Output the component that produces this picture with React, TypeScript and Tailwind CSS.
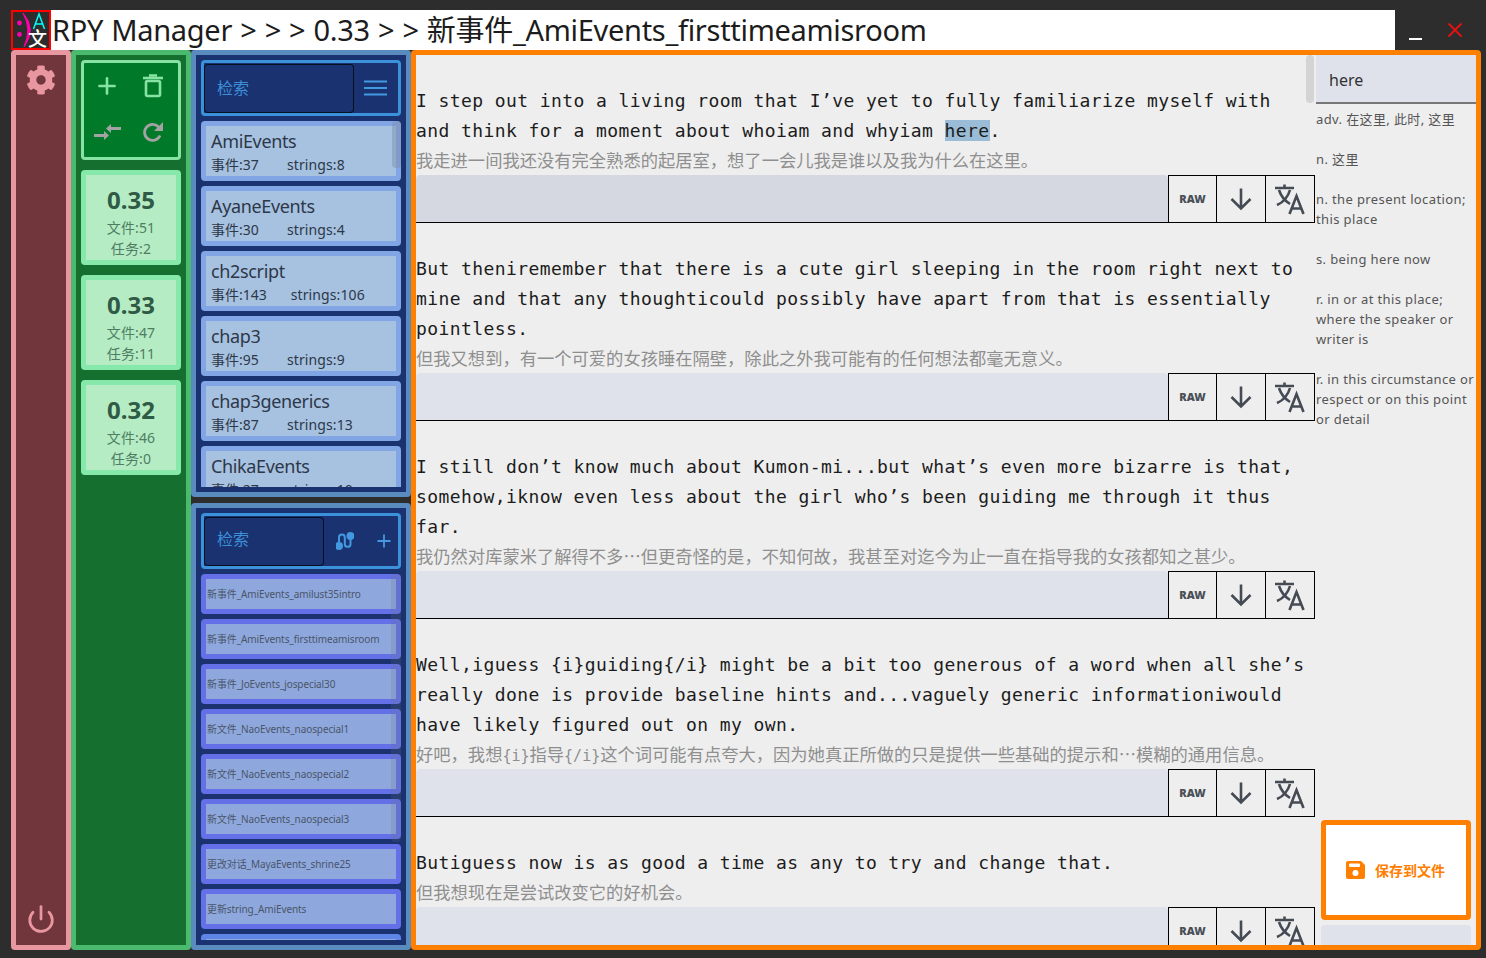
import React from "react";
import { Power, Plus } from "lucide-react";
import { FaCog } from "react-icons/fa";

const sans = "font-['Noto_Sans','Noto_Sans_CJK_SC',sans-serif]";
const mono = "font-['DejaVu_Sans_Mono','Noto_Sans_CJK_SC',monospace]";

const versions = [
  { v: "0.35", files: "文件:51", tasks: "任务:2" },
  { v: "0.33", files: "文件:47", tasks: "任务:11" },
  { v: "0.32", files: "文件:46", tasks: "任务:0" },
];
const scripts = [
  { n: "AmiEvents", e: "事件:37", s: "strings:8" },
  { n: "AyaneEvents", e: "事件:30", s: "strings:4" },
  { n: "ch2script", e: "事件:143", s: "strings:106" },
  { n: "chap3", e: "事件:95", s: "strings:9" },
  { n: "chap3generics", e: "事件:87", s: "strings:13" },
  { n: "ChikaEvents", e: "事件:27", s: "strings:10" },
];
const tasks = [
  "新事件_AmiEvents_amilust35intro",
  "新事件_AmiEvents_firsttimeamisroom",
  "新事件_JoEvents_jospecial30",
  "新文件_NaoEvents_naospecial1",
  "新文件_NaoEvents_naospecial2",
  "新文件_NaoEvents_naospecial3",
  "更改对话_MayaEvents_shrine25",
  "更新string_AmiEvents",
];
const entries: { lines: React.ReactNode[]; zh: string; shade?: boolean }[] = [
  {
    lines: [
      "I step out into a living room that I’ve yet to fully familiarize myself with",
      <>and think for a moment about whoiam and whyiam <span className="bg-[#9bbcd6]">here</span>.</>,
    ],
    zh: "我走进一间我还没有完全熟悉的起居室，想了一会儿我是谁以及我为什么在这里。",
    shade: true,
  },
  {
    lines: [
      "But theniremember that there is a cute girl sleeping in the room right next to",
      "mine and that any thoughticould possibly have apart from that is essentially",
      "pointless.",
    ],
    zh: "但我又想到，有一个可爱的女孩睡在隔壁，除此之外我可能有的任何想法都毫无意义。",
  },
  {
    lines: [
      "I still don’t know much about Kumon-mi...but what’s even more bizarre is that,",
      "somehow,iknow even less about the girl who’s been guiding me through it thus",
      "far.",
    ],
    zh: "我仍然对库蒙米了解得不多⋯但更奇怪的是，不知何故，我甚至对迄今为止一直在指导我的女孩都知之甚少。",
  },
  {
    lines: [
      "Well,iguess {i}guiding{/i} might be a bit too generous of a word when all she’s",
      "really done is provide baseline hints and...vaguely generic informationiwould",
      "have likely figured out on my own.",
    ],
    zh: "好吧，我想{i}指导{/i}这个词可能有点夸大，因为她真正所做的只是提供一些基础的提示和⋯模糊的通用信息。",
  },
  {
    lines: ["Butiguess now is as good a time as any to try and change that."],
    zh: "但我想现在是尝试改变它的好机会。",
  },
];
const defs = [
  ["adv. 在这里, 此时, 这里"],
  ["n. 这里"],
  ["n. the present location;", "this place"],
  ["s. being here now"],
  ["r. in or at this place;", "where the speaker or", "writer is"],
  ["r. in this circumstance or", "respect or on this point", "or detail"],
];

function ZhText({ text }: { text: string }) {
  const parts = text.split(/(\{\/?i\}|⋯)/);
  return (
    <>
      {parts.map((p, i) => {
        if (p === "⋯") return <span key={i} className="font-['Noto_Sans_CJK_SC'] leading-none">{p}</span>;
        if (p === "{i}" || p === "{/i}") return <span key={i} className="text-[15px] leading-none">{p}</span>;
        return <span key={i}>{p}</span>;
      })}
    </>
  );
}

function Trash() {
  return (
    <svg width="24" height="24" viewBox="0 0 24 24" fill="none" stroke="#86e3a4" strokeWidth="2.6">
      <path d="M2 4h20" />
      <rect x="5" y="7" width="14" height="15" rx="1.5" />
      <path d="M8 1.500h8" />
    </svg>
  );
}
function Merge() {
  return (
    <svg width="27" height="16" viewBox="0 0 27 16" fill="#a3a3a3">
      <path d="M0 10h10V7l5 4.500-5 4.500v-3H0z" />
      <path d="M27 3H17V0l-5 4.500 5 4.500V6h10z" />
    </svg>
  );
}
function Refresh() {
  return (
    <svg width="22" height="22" viewBox="0 0 22 22" fill="none">
      <path d="M18 14.500a8 8 0 1 1-1.500-8.500" stroke="#a3a3a3" strokeWidth="2.800" />
      <path d="M21 1v9h-9z" fill="#a3a3a3" />
    </svg>
  );
}
function Route() {
  return (
    <svg width="18" height="18" viewBox="0 0 18 18" fill="none" stroke="#4299e1" strokeWidth="2">
      <circle cx="3" cy="14" r="3" fill="#4299e1" />
      <circle cx="14.500" cy="4" r="3" fill="#4299e1" />
      <path d="M3 14V5.500a2.900 2.900 0 0 1 5.800 0v7a2.900 2.900 0 0 0 5.700 0V4" />
    </svg>
  );
}
function ArrowDownIcon() {
  return (
    <svg width="24" height="24" viewBox="0 0 24 24" fill="none" stroke="#454b54" strokeWidth="2.600">
      <path d="M12 1.500v20M2.500 12l9.500 9.500 9.500-9.500" />
    </svg>
  );
}
function Translate() {
  return (
    <svg width="32" height="32" viewBox="0 0 32 32" fill="none" stroke="#454b54" strokeWidth="2.600">
      <path d="M1 5h19M10.500 1.500V5" />
      <path d="M5 7c2 6 6 11 11 14M16 7c-2 7-6 12-13 15" />
      <path d="M15.500 31l7-18 7 18M18 25.500h9.500" />
    </svg>
  );
}
function SaveIcon() {
  return (
    <svg width="19" height="18" viewBox="0 0 19 18">
      <path d="M2 0h13l4 4v12a2 2 0 0 1-2 2H2a2 2 0 0 1-2-2V2a2 2 0 0 1 2-2z" fill="#ff8000" />
      <rect x="3" y="2.500" width="11" height="3.500" rx="1" fill="#fff" />
      <circle cx="9.500" cy="12" r="3" fill="#fff" />
    </svg>
  );
}
function MenuIcon() {
  return (
    <svg width="23" height="16" viewBox="0 0 23 16" stroke="#4299e1" strokeWidth="2.200">
      <path d="M0 1.500h23M0 8h23M0 14.500h23" />
    </svg>
  );
}

function Entry({ lines, zh, shade }: { lines: React.ReactNode[]; zh: string; shade?: boolean }) {
  return (
    <div className="shrink-0 pt-[31px]">
      <div className={`${mono} text-[18px] leading-[30px] tracking-[0.41px] text-[#1c1c1c] whitespace-nowrap`}>
        {lines.map((l, i) => (
          <div key={i}>{l}</div>
        ))}
      </div>
      <div className={`${mono} h-[29px] text-[17.3px] leading-[31px] text-[#8f8f8f] whitespace-nowrap`}>
        <ZhText text={zh} />
      </div>
      <div className="flex h-[48px] border-b border-black">
        <div className={`flex-1 rounded-t ${shade ? "bg-[#d5d8e1]" : "bg-[#dfe2eb]"}`} />
        <div className="flex w-[147px] border-l border-t border-black">
          <div className={`${sans} flex w-[48px] items-center justify-center border-r border-black text-[11px] font-black text-[#4a4f57]`}>RAW</div>
          <div className="flex w-[49px] items-center justify-center border-r border-black">
            <ArrowDownIcon />
          </div>
          <div className="flex w-[49px] items-center justify-center border-r border-black">
            <Translate />
          </div>
        </div>
      </div>
    </div>
  );
}

export default function App() {
  return (
    <div className={`${sans} flex h-[958px] w-[1486px] flex-col overflow-hidden bg-[#2d2d2d] pl-[11px] pr-[5px] pt-[10px] pb-[8px]`}>
      <div className="flex h-[40px] shrink-0 items-stretch">
        <div className="flex h-[40px] w-[1384px] items-center bg-white">
          <div className="relative h-[40px] w-[40px] shrink-0 border-[2px] border-[#ff0000] bg-[#2d2d2d]">
            <svg width="36" height="36" viewBox="0 0 36 36" className="absolute left-0 top-0">
              <circle cx="6.500" cy="11" r="2.400" fill="#f0a" />
              <circle cx="6.500" cy="22.500" r="2.400" fill="#f0a" />
              <path d="M10 1 Q24 17 11 35 Q19 17 10 1z" fill="#f0a" stroke="#f0a" strokeWidth="1" />
              <path d="M20.500 17 L26 2 L31.500 17 M22.500 12 H29.500" fill="none" stroke="#0ff" strokeWidth="1.500" />
            </svg>
            <span className="absolute left-[15px] top-[15px] font-['Noto_Sans_CJK_SC'] text-[19px] leading-[22px] font-medium text-white">文</span>
          </div>
          <div className="ml-px text-[29px] leading-[40px] tracking-[-0.3px] [word-spacing:0.9px] text-[#1c1c1c] whitespace-nowrap">
            RPY Manager &gt; &gt; &gt; 0.33 &gt; &gt; 新事件_AmiEvents_firsttimeamisroom
          </div>
        </div>
        <div className="flex flex-1 items-center">
          <div className="ml-[14px] mt-[17px] h-[2px] w-[13px] bg-white" />
          <svg width="16" height="16" viewBox="0 0 16 16" className="ml-[25px] mt-[-1px]" stroke="#e81010" strokeWidth="1.800">
            <path d="M1.500 1.500L14.500 14.500M14.500 1.500L1.500 14.500" />
          </svg>
        </div>
      </div>

      <div className="flex h-[900px] shrink-0">
        {/* settings rail */}
        <div className="flex w-[60px] shrink-0 flex-col items-center justify-between rounded border-[5px] border-[#e8969f] bg-[#70363c] pt-[10px] pb-[11px]">
          <FaCog size={30} color="#e8969f" />
          <Power size={30} color="#e8969f" strokeWidth={2.2} />
        </div>

        {/* versions */}
        <div className="flex w-[120px] shrink-0 flex-col gap-[10px] rounded border-[5px] border-[#4cba6e] bg-[#15702f] p-[5px]">
          <div className="grid h-[100px] grid-cols-2 grid-rows-2 place-items-center rounded-sm border-[3px] border-[#86e3a4] bg-[#007a28] pr-[2px] pb-[2px]">
            <Plus size={26} color="#86e3a4" strokeWidth={2.4} />
            <Trash />
            <Merge />
            <Refresh />
          </div>
          {versions.map((c) => (
            <div key={c.v} className="flex h-[95px] flex-col items-center rounded border-[5px] border-[#86e9ab] bg-[#b5ecc3] pt-[9px] text-[#2f5a45]">
              <div className="text-[24px] leading-[32px] font-bold">{c.v}</div>
              <div className="mt-px text-[14px] leading-[21px] tracking-[0.15px] text-[#4f7d64]">{c.files}</div>
              <div className="text-[14px] leading-[21px] tracking-[0.15px] text-[#4f7d64]">{c.tasks}</div>
            </div>
          ))}
        </div>

        {/* lists */}
        <div className="flex w-[220px] shrink-0 flex-col justify-between">
          <div className="flex h-[447px] flex-col gap-[5px] overflow-hidden rounded border-[5px] border-[#5a8bbf] bg-[#1a3270] p-[5px]">
            <div className="flex h-[56px] shrink-0 items-center rounded-sm border-[3px] border-[#3b92da]">
              <div className="flex h-[49px] w-[150px] items-center rounded border border-black/70 bg-[#1a3270] pb-px pl-[12px] text-[16px] text-[#3d8fd8]">检索</div>
              <div className="flex flex-1 items-center justify-center pr-px"><MenuIcon /></div>
            </div>
            <div className="relative flex min-h-0 flex-1 flex-col gap-[5px] overflow-hidden">
              {scripts.map((s) => (
                <div key={s.n} className="flex h-[60px] shrink-0 flex-col rounded border-[5px] border-[#82a5e6] bg-[#a6c2e0] pt-[2px] pl-[5px] text-[#2d3748]">
                  <div className="text-[18px] leading-[26px] tracking-[-0.35px]">{s.n}</div>
                  <div className="flex text-[14px] leading-[22px]">
                    <span className="min-w-[76px] pr-[24px]">{s.e}</span>
                    <span className="tracking-[0.1px]">{s.s}</span>
                  </div>
                </div>
              ))}
              <div className="absolute right-0 top-0 h-[47px] w-[9px] rounded bg-[#7f8fb0]/50" />
            </div>
          </div>
          <div className="flex h-[447px] flex-col gap-[5px] overflow-hidden rounded border-[5px] border-[#5a8bbf] bg-[#1a3270] p-[5px]">
            <div className="flex h-[56px] shrink-0 items-center rounded-sm border-[3px] border-[#3b92da]">
              <div className="flex h-[49px] w-[120px] items-center rounded border border-black/70 bg-[#1a3270] pb-[4px] pl-[12px] text-[16px] text-[#3d8fd8]">检索</div>
              <div className="ml-[11px] flex w-[20px] justify-center"><Route /></div>
              <div className="ml-[19px] flex w-[20px] justify-center"><Plus size={20} color="#4299e1" strokeWidth={2.2} /></div>
            </div>
            <div className="relative flex min-h-0 flex-1 flex-col gap-[5px] overflow-hidden">
              {tasks.map((t) => (
                <div key={t} className="flex h-[40px] shrink-0 items-center rounded border-[5px] border-[#6470e8] bg-[#8ea8de] pl-px text-[10px] tracking-[-0.1px] text-[#4a5568] whitespace-nowrap">
                  {t}
                </div>
              ))}
              <div className="h-[40px] shrink-0 rounded border-[5px] border-[#5f86e6] bg-[#8ea8de]" />
              <div className="absolute right-0 top-0 h-[268px] w-[10px] rounded bg-[#6b7280]/20" />
            </div>
          </div>
        </div>

        {/* editor */}
        <div className="flex min-w-0 flex-1 rounded border-[5px] border-[#ff8000] bg-[#eeeeee]">
          <div className="relative w-[899px] shrink-0 overflow-hidden">
            <div className="flex flex-col">
              {entries.map((e, i) => (
                <Entry key={i} {...e} />
              ))}
            </div>
            <div className="absolute right-px top-0 h-[48px] w-[8px] rounded bg-[#d4d4d4]" />
          </div>
          <div className="flex min-w-0 flex-1 flex-col pl-px">
            <div className="flex h-[49px] shrink-0 items-center border-b-[2px] border-[#777] bg-[#dfe2eb] pt-[3px] pl-[13px] text-[16px] text-[#333]">here</div>
            <div className="flex flex-1 flex-col gap-[20px] pt-[5px] text-[13px] leading-[20px] tracking-[0.38px] text-[#555] whitespace-nowrap">
              {defs.map((d, i) => (
                <div key={i}>
                  {d.map((l) => (
                    <div key={l}>{l}</div>
                  ))}
                </div>
              ))}
            </div>
            <div className="mx-[5px] flex h-[100px] shrink-0 items-center justify-center gap-[10px] rounded border-[5px] border-[#ff8000] bg-white pr-px text-[14px] font-bold text-[#ff8000]">
              <SaveIcon />
              <span>保存到文件</span>
            </div>
            <div className="mx-[5px] mt-[5px] h-[20px] shrink-0 rounded-t-sm bg-[#dfe2eb]" />
          </div>
        </div>
      </div>
    </div>
  );
}
